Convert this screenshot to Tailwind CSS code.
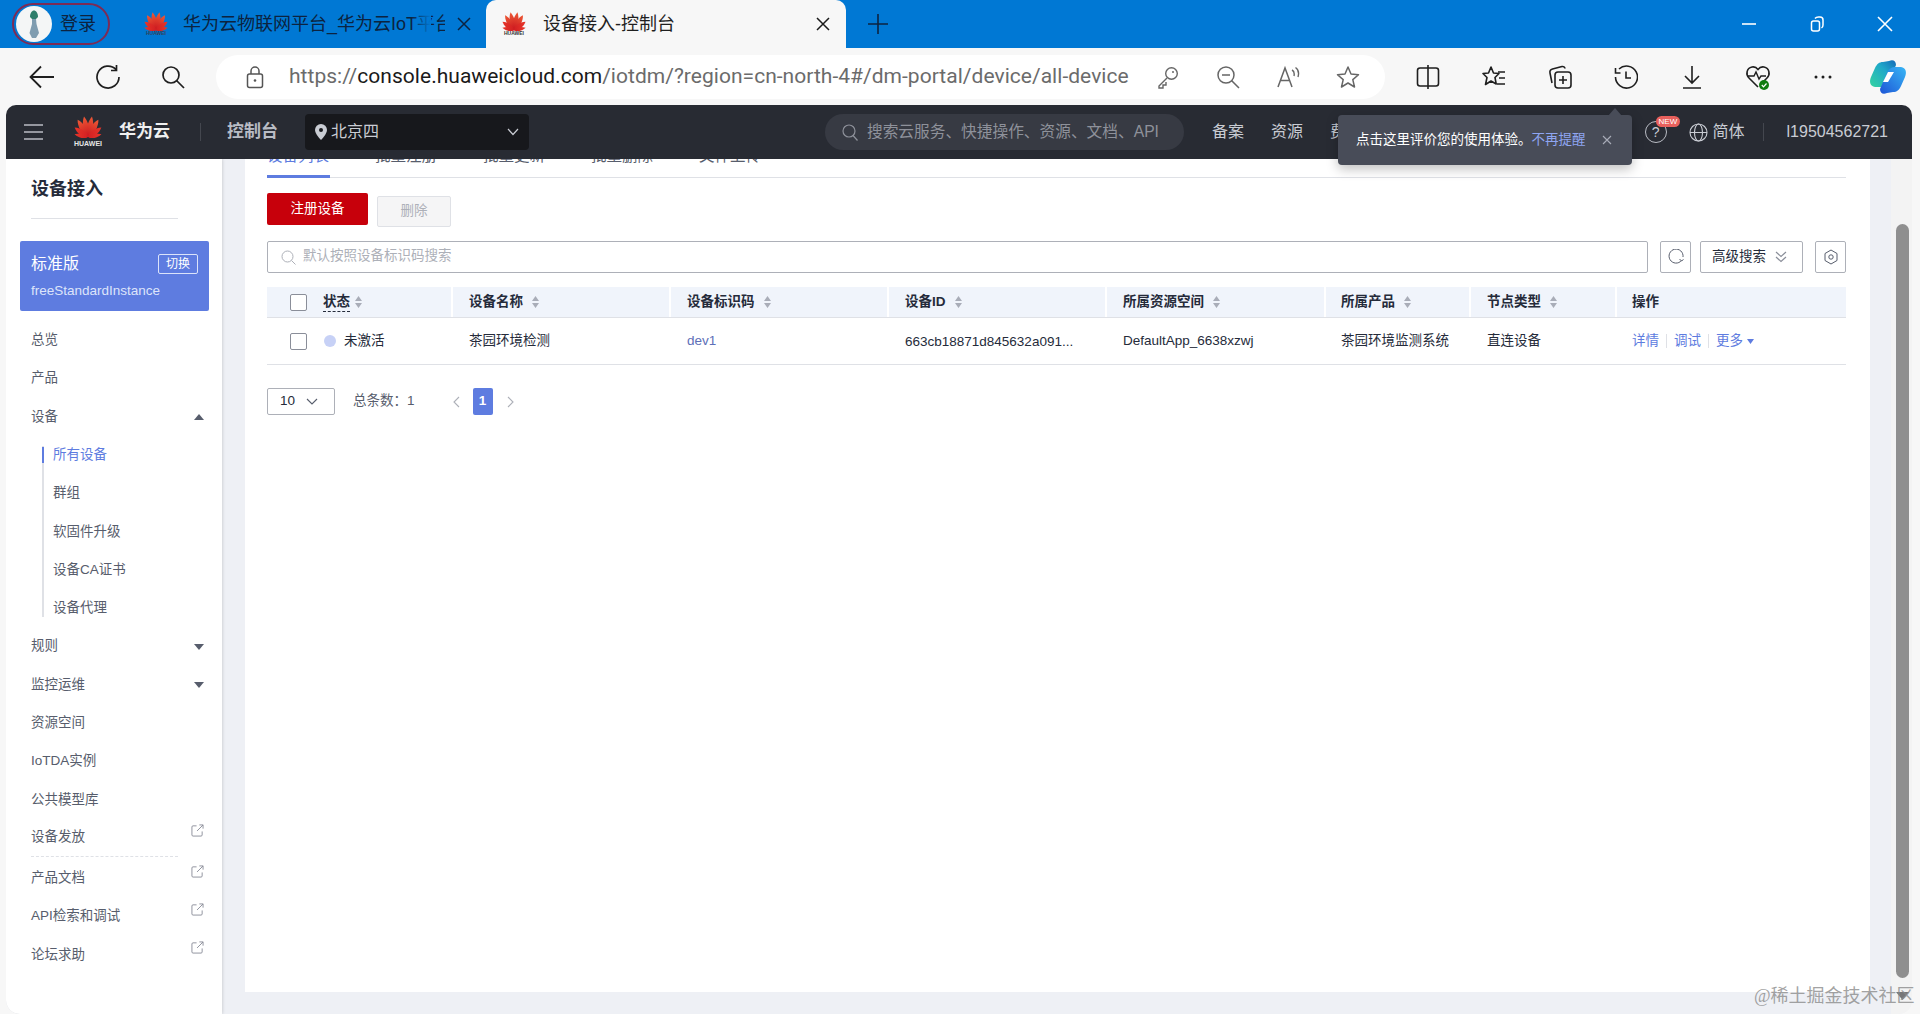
<!DOCTYPE html>
<html lang="en">
<head>
  <meta charset="UTF-8" />
  <meta name="viewport" content="width=device-width, initial-scale=1.0" />
  <title>设备接入-控制台</title>
  <script src="https://cdn.jsdelivr.net/npm/@tailwindcss/browser@4"></script>
</head>
<body class="relative w-[1920px] h-[1014px] overflow-hidden flex flex-col bg-[#f7f7f7] text-[#575d6c] text-[13.5px] [font-family:'Liberation_Sans','Noto_Sans_CJK_SC',sans-serif]">
  <!-- shared icons -->
  <svg class="absolute w-0 h-0">
    <defs>
      <linearGradient id="hwa" x1="0" y1="0" x2="0" y2="1"><stop offset="0" stop-color="#ee5a36" /><stop offset="1" stop-color="#c9151e" /></linearGradient>
      <linearGradient id="hwb" x1="0" y1="0" x2="0" y2="1"><stop offset="0" stop-color="#e8362a" /><stop offset="1" stop-color="#d11f22" /></linearGradient>
    </defs>
    <symbol id="petals" viewBox="4 0 32 24">
      <g fill="url(#hwa)">
        <path d="M20 23C15.5 17 16 7 20 0C24 7 24.5 17 20 23Z" transform="rotate(-11 20 23)" />
        <path d="M20 23C15.5 17 16 7 20 0C24 7 24.5 17 20 23Z" transform="rotate(11 20 23)" />
        <path d="M20 23C15.5 17 16 7 20 1C24 7 24.5 17 20 23Z" transform="rotate(-31 20 23)" />
        <path d="M20 23C15.5 17 16 7 20 1C24 7 24.5 17 20 23Z" transform="rotate(31 20 23)" />
      </g>
      <g fill="url(#hwb)">
        <path d="M20 23C16 19 16 11 20 5C24 11 24 19 20 23Z" transform="rotate(-54 20 23)" />
        <path d="M20 23C16 19 16 11 20 5C24 11 24 19 20 23Z" transform="rotate(54 20 23)" />
        <path d="M20 23C17 20 16.5 15 20 8C23.5 15 23 20 20 23Z" transform="rotate(-78 20 23)" />
        <path d="M20 23C17 20 16.5 15 20 8C23.5 15 23 20 20 23Z" transform="rotate(78 20 23)" />
      </g>
    </symbol>
    <symbol id="sort" viewBox="0 0 8 14">
      <path d="M4 1L7.5 6H.5Z M4 13L.5 8H7.5Z" fill="#a9adb8" />
    </symbol>
    <symbol id="ext" viewBox="0 0 14 14">
      <path d="M6 2H2.2A1.2 1.2 0 0 0 1 3.2V11.8A1.2 1.2 0 0 0 2.2 13H10.8A1.2 1.2 0 0 0 12 11.8V8M6.5 7.5L13 1M9 1H13V5" fill="none" stroke="#8a8e99" stroke-width="1" />
    </symbol>
  </svg>

  <!-- browser tab strip -->
  <div class="h-12 shrink-0 bg-[#0078d4] flex items-center text-[#0c2340]">
    <div class="ml-3 w-[98px] h-[42px] rounded-full border-2 border-[#7d2b55] flex items-center gap-[8px] pl-[2px]">
      <svg class="w-9 h-9 shrink-0" viewBox="0 0 36 36">
        <circle cx="18" cy="18" r="18" fill="#f4f6f6" />
        <path d="M14 11C14 7 16 4.5 18 4.5S22 7 22 11L20 13H16Z" fill="#2f7f6b" />
        <path d="M16 13H20L20.5 18L23 27L20 32H16L13.5 27L16 18Z" fill="#7f9db0" />
      </svg>
      <span class="text-[18px]">登录</span>
    </div>
    <div class="relative w-[358px] ml-5 h-12 flex items-center shrink-0">
      <div class="ml-[14px] w-6 flex flex-col items-center shrink-0">
        <svg class="w-[26px] h-[19px]"><use href="#petals" /></svg>
        <span class="text-[5px] leading-[5px] font-bold text-[#33415c]">HUAWEI</span>
      </div>
      <span class="ml-[15px] w-[262px] text-[18px] whitespace-nowrap overflow-hidden">华为云物联网平台_华为云IoT平台</span>
      <div class="absolute left-[281px] top-0 w-[20px] h-12 bg-linear-to-r from-transparent to-[#0078d4]"></div>
      <svg class="ml-[12px] w-[14px] h-[14px]" viewBox="0 0 14 14"><path d="M1 1L13 13M13 1L1 13" stroke="#0c2340" stroke-width="1.5" /></svg>
    </div>
    <div class="relative -ml-[2px] w-[360px] h-12 mt-0 rounded-t-[10px] bg-[#f7f7f7] flex items-center text-[#1f1f1f] shrink-0">
      <div class="ml-[16px] w-6 flex flex-col items-center shrink-0">
        <svg class="w-[26px] h-[19px]"><use href="#petals" /></svg>
        <span class="text-[5px] leading-[5px] font-bold text-[#333]">HUAWEI</span>
      </div>
      <span class="ml-[17px] text-[18px] whitespace-nowrap">设备接入-控制台</span>
      <svg class="absolute left-[330px] top-[17px] w-[14px] h-[14px]" viewBox="0 0 14 14"><path d="M1 1L13 13M13 1L1 13" stroke="#1a1a1a" stroke-width="1.5" /></svg>
    </div>
    <svg class="ml-[22px] w-5 h-5 shrink-0" viewBox="0 0 20 20"><path d="M10 0V20M0 10H20" stroke="#0c2340" stroke-width="1.6" /></svg>
    <div class="ml-auto flex items-center pr-[27px] gap-[52px]">
      <svg class="w-4 h-4" viewBox="0 0 16 16"><path d="M1 8H15" stroke="#fff" stroke-width="1.6" /></svg>
      <svg class="w-4 h-4" viewBox="0 0 16 16"><rect x="2.5" y="5" width="8" height="10" rx="2" fill="none" stroke="#fff" stroke-width="1.5" /><path d="M6 2.5C7 1.2 8 1 9.5 1H11C13 1 14 2 14 4V9C14 10.5 13.5 11.3 12.5 12" fill="none" stroke="#fff" stroke-width="1.5" /></svg>
      <svg class="w-4 h-4" viewBox="0 0 16 16"><path d="M1 1L15 15M15 1L1 15" stroke="#fff" stroke-width="1.6" /></svg>
    </div>
  </div>

  <!-- browser toolbar -->
  <div class="h-[57px] shrink-0 flex items-center bg-[#f7f7f7] text-[#1f1f1f]">
    <div class="flex items-center w-[216px] pl-[29px] gap-[40px] shrink-0">
      <svg class="w-[26px] h-[26px]" viewBox="0 0 26 26"><path d="M25 13H2M12 2.5L1.5 13L12 23.5" fill="none" stroke="#1f1f1f" stroke-width="1.8" /></svg>
      <svg class="w-[26px] h-[26px]" viewBox="0 0 26 26"><path d="M21 5.5A11 11 0 1 0 24 13M21.5 1V6.5H16" fill="none" stroke="#1f1f1f" stroke-width="1.7" /></svg>
      <svg class="w-[24px] h-[24px]" viewBox="0 0 24 24"><circle cx="10" cy="10" r="8" fill="none" stroke="#1f1f1f" stroke-width="1.7" /><path d="M15.5 15.5L23 23" stroke="#1f1f1f" stroke-width="1.7" /></svg>
    </div>
    <div class="w-[1169px] h-[44px] rounded-full bg-white flex items-center pl-[30px] pr-[25px] shrink-0">
      <svg class="w-[18px] h-[24px] shrink-0" viewBox="0 0 18 24"><path d="M5 9V6A4 4 0 0 1 13 6V9" fill="none" stroke="#555" stroke-width="1.5" /><rect x="1.5" y="9" width="15" height="13.5" rx="2" fill="none" stroke="#555" stroke-width="1.5" /><circle cx="9" cy="15.5" r="1.3" fill="#555" /></svg>
      <span class="ml-[25px] text-[21px] tracking-[0.03px] whitespace-nowrap text-[#6b6b6b] [font-family:Roboto,sans-serif]">https://<span class="text-[#1a1a1a]">console.huaweicloud.com</span>/iotdm/?region=cn-north-4#/dm-portal/device/all-device</span>
      <div class="ml-auto flex items-center gap-[36px]">
        <svg class="w-6 h-6" viewBox="0 0 24 24"><circle cx="15.5" cy="8.5" r="5.8" fill="none" stroke="#666" stroke-width="1.4" /><path d="M11 13L3 21V23H7V20H10V17" fill="none" stroke="#666" stroke-width="1.4" /><circle cx="17" cy="7" r="1" fill="#666" /></svg>
        <svg class="w-6 h-6" viewBox="0 0 24 24"><circle cx="10" cy="10" r="8" fill="none" stroke="#666" stroke-width="1.5" /><path d="M15.5 15.5L23 23M6 10H14" stroke="#666" stroke-width="1.5" /></svg>
        <svg class="w-6 h-6" viewBox="0 0 24 24"><path d="M2 22L9 3L16 22M4.5 15.5H13.5" fill="none" stroke="#666" stroke-width="1.5" /><path d="M16 5C18 6 18.5 8.5 18 11M19.5 2.5C22.5 4.5 23 8.5 22 12" fill="none" stroke="#666" stroke-width="1.4" /></svg>
        <svg class="w-6 h-6" viewBox="0 0 24 24"><path d="M12 2L15 9L22.5 9.7L16.8 14.6L18.5 22L12 18L5.5 22L7.2 14.6L1.5 9.7L9 9Z" fill="none" stroke="#666" stroke-width="1.5" stroke-linejoin="round" /></svg>
      </div>
    </div>
    <div class="flex items-center pl-[31px] gap-[42px]">
      <svg class="w-6 h-6" viewBox="0 0 24 24"><rect x="1.5" y="3" width="21" height="18" rx="2.5" fill="none" stroke="#1f1f1f" stroke-width="1.6" /><path d="M12 0V24" stroke="#1f1f1f" stroke-width="1.6" /></svg>
      <svg class="w-6 h-6" viewBox="0 0 24 24"><path d="M9 2L11.5 8L17 8.5L13 12.5L14.2 19L9 16L3.5 19.5L5 12.5L1 8.5L6.5 8Z" fill="none" stroke="#1f1f1f" stroke-width="1.6" stroke-linejoin="round" /><path d="M16 7H23M17 13H23M15 19H23" stroke="#1f1f1f" stroke-width="1.6" /></svg>
      <svg class="w-6 h-6" viewBox="0 0 24 24"><rect x="7" y="7" width="16" height="16" rx="3" fill="none" stroke="#1f1f1f" stroke-width="1.6" /><path d="M15 11V19M11 15H19" stroke="#1f1f1f" stroke-width="1.6" /><path d="M4 18L2 8C1.6 6 2.5 4.5 4.5 4L14 1.5C15.5 1.2 16.8 2 17 3.5" fill="none" stroke="#1f1f1f" stroke-width="1.6" /></svg>
      <svg class="w-6 h-6" viewBox="0 0 24 24"><path d="M5 4A11 11 0 1 1 1.5 12M1.5 3V8H6.5" fill="none" stroke="#1f1f1f" stroke-width="1.6" /><path d="M12 6.5V13H17" fill="none" stroke="#1f1f1f" stroke-width="1.6" /></svg>
      <svg class="w-6 h-6" viewBox="0 0 24 24"><path d="M12 1V17M5 11L12 18L19 11M3 23H21" fill="none" stroke="#1f1f1f" stroke-width="1.6" /></svg>
      <svg class="w-7 h-7 -ml-[2px]" viewBox="0 0 28 28"><path d="M14 24L5 15C1.5 11.5 2.5 5 8 4C10.5 3.5 12.5 4.5 14 6.5C15.5 4.5 17.5 3.5 20 4C25.5 5 26.5 11.5 23 15L19 19" fill="none" stroke="#1f1f1f" stroke-width="1.6" /><path d="M4 13H10L12 9L15 16L17 13H22" fill="none" stroke="#1f1f1f" stroke-width="1.4" /><circle cx="20" cy="22" r="5" fill="#107c10" /><path d="M17.8 22L19.5 23.8L22.5 20.5" fill="none" stroke="#fff" stroke-width="1.2" /></svg>
      <svg class="w-5 h-5 -ml-[1px]" viewBox="0 0 20 20"><circle cx="3" cy="10" r="1.5" fill="#1f1f1f" /><circle cx="10" cy="10" r="1.5" fill="#1f1f1f" /><circle cx="17" cy="10" r="1.5" fill="#1f1f1f" /></svg>
      <svg class="w-[38px] h-[36px] -ml-[6px]" viewBox="0 0 38 36">
        <defs>
          <linearGradient id="cpa" x1="0" y1="1" x2="1" y2="0"><stop offset="0" stop-color="#34d3a0" /><stop offset="0.6" stop-color="#1fa8c9" /><stop offset="1" stop-color="#1469b8" /></linearGradient>
          <linearGradient id="cpb" x1="0" y1="1" x2="1" y2="0"><stop offset="0" stop-color="#1d55d6" /><stop offset="1" stop-color="#38b6f5" /></linearGradient>
        </defs>
        <path d="M20 2C24 0 27 2 27 6L20 22C18 27 15 28 11 28H6C1 27 0 23 2 18L6 9C8 5 10 3 14 3Z" fill="url(#cpa)" />
        <path d="M18 34C14 36 11 34 11 30L18 14C20 9 23 8 27 8H32C37 9 38 13 36 18L32 27C30 31 28 33 24 33Z" fill="url(#cpb)" />
        <path d="M19 13H25L19 23H14Z" fill="#fff" />
      </svg>
    </div>
  </div>

  <!-- console window -->
  <div class="flex-1 min-h-0 mx-[6px] mr-[8px] flex flex-col rounded-t-[10px] overflow-hidden rounded-b-[14px]">
    <!-- console header -->
    <div class="relative z-10 h-[54px] shrink-0 bg-[#282b33] flex items-center text-[16px] text-[#c9ccd3]">
      <svg class="ml-[18px] w-[19px] h-[16px] shrink-0" viewBox="0 0 19 16"><path d="M0 1H19M0 8H19M0 15H19" stroke="#b9bcc4" stroke-width="1.5" /></svg>
      <div class="ml-[25px] w-[40px] flex flex-col items-center shrink-0">
        <svg class="w-[30px] h-[22px]"><use href="#petals" /></svg>
        <span class="mt-[2px] text-[7px] leading-[8px] font-bold text-[#e6e6e6]">HUAWEI</span>
      </div>
      <span class="ml-[11px] text-[17px] font-bold text-[#f0f0f0]">华为云</span>
      <div class="ml-[30px] w-px h-[18px] bg-[#44474f]"></div>
      <span class="ml-[26px] text-[17px] font-bold text-[#b9bcc4]">控制台</span>
      <div class="ml-[27px] w-[224px] h-[36px] rounded-[4px] bg-[#17181c] flex items-center pl-[10px] pr-[10px]">
        <svg class="w-[12px] h-[16px]" viewBox="0 0 12 16"><path d="M6 0A6 6 0 0 0 0 6C0 10 6 16 6 16S12 10 12 6A6 6 0 0 0 6 0Z" fill="#c9ccd3" /><circle cx="6" cy="6" r="2" fill="#17181c" /></svg>
        <span class="ml-[4px] text-[#c9ccd3]">北京四</span>
        <svg class="ml-auto w-[12px] h-[8px]" viewBox="0 0 12 8"><path d="M1 1L6 6.5L11 1" fill="none" stroke="#c9ccd3" stroke-width="1.2" /></svg>
      </div>
      <div class="ml-[296px] w-[359px] h-[36px] rounded-full bg-[#373a43] flex items-center pl-[17px] text-[#8e919a]">
        <svg class="w-[16px] h-[17px] shrink-0" viewBox="0 0 16 17"><circle cx="7" cy="7" r="6" fill="none" stroke="#8e919a" stroke-width="1.2" /><path d="M11 11.5L15.5 16.5" stroke="#8e919a" stroke-width="1.2" /></svg>
        <span class="ml-[9px] whitespace-nowrap text-[15.7px]">搜索云服务、快捷操作、资源、文档、API</span>
      </div>
      <span class="ml-[28px]">备案</span>
      <span class="ml-[27px]">资源</span>
      <span class="ml-[27px] whitespace-nowrap">费用</span>
      <div class="ml-auto flex items-center pr-[24px]">
        <div class="relative w-[22px] h-[22px] rounded-full border border-[#b9bcc4] flex items-center justify-center text-[14px]">?
          <span class="absolute -top-[6px] left-[10px] h-[11px] px-[3px] rounded-full bg-[#e8605c] text-[8px] leading-[11px] text-white">NEW</span>
        </div>
        <svg class="ml-[22px] w-[19px] h-[19px]" viewBox="0 0 19 19"><circle cx="9.5" cy="9.5" r="8.5" fill="none" stroke="#c9ccd3" stroke-width="1.1" /><ellipse cx="9.5" cy="9.5" rx="4" ry="8.5" fill="none" stroke="#c9ccd3" stroke-width="1.1" /><path d="M1 9.5H18" stroke="#c9ccd3" stroke-width="1.1" /></svg>
        <span class="ml-[5px]">简体</span>
        <div class="ml-[18px] w-px h-[18px] bg-[#44474f]"></div>
        <span class="ml-[23px]">l19504562721</span>
      </div>
    </div>

    <!-- sidebar and content -->
    <div class="flex-1 min-h-0 flex bg-[#eef0f5]">
      <aside class="w-[216px] shrink-0 bg-white shadow-[1px_0_3px_rgba(0,0,0,0.12)] flex flex-col rounded-bl-[14px]">
        <div class="mx-[25px] pt-[18px] pb-[17px] text-[18px] leading-[24px] font-bold text-[#252b3a] border-b border-[#dfe1e6] w-[147px]">设备接入</div>
        <div class="ml-[14px] mr-[13px] mt-[22px] h-[70px] rounded-[2px] bg-[#5e7ce0] px-[11px] pt-[13px] text-white">
          <div class="flex items-center justify-between">
            <span class="text-[16px] leading-[20px]">标准版</span>
            <span class="w-[40px] h-[20px] border border-[#dbe3fa] rounded-[2px] text-[12px] leading-[18px] text-center">切换</span>
          </div>
          <div class="mt-[9px] text-[13.5px] leading-[16px] text-[#dde4fa]">freeStandardInstance</div>
        </div>
        <nav class="mt-[10px] flex flex-col [&>*]:h-[38.3px] [&>*]:flex [&>*]:items-center [&>*]:pl-[25px] [&>*]:pr-[18px]">
          <a>总览</a>
          <a>产品</a>
          <a class="justify-between">设备<svg class="w-[10px] h-[6px]" viewBox="0 0 10 6"><path d="M5 0L10 6H0Z" fill="#575d6c" /></svg></a>
          <a class="relative !pl-[47px] text-[#5e7ce0]"><i class="absolute left-[36px] top-[10px] w-[2px] h-[28.3px] bg-[#dfe1e6]"></i><i class="absolute left-[36px] top-[11px] w-[2px] h-[16px] bg-[#5e7ce0]"></i>所有设备</a>
          <a class="relative !pl-[47px]"><i class="absolute left-[36px] top-0 w-[2px] h-full bg-[#dfe1e6]"></i>群组</a>
          <a class="relative !pl-[47px]"><i class="absolute left-[36px] top-0 w-[2px] h-full bg-[#dfe1e6]"></i>软固件升级</a>
          <a class="relative !pl-[47px]"><i class="absolute left-[36px] top-0 w-[2px] h-full bg-[#dfe1e6]"></i>设备CA证书</a>
          <a class="relative !pl-[47px]"><i class="absolute left-[36px] top-0 w-[2px] h-[28px] bg-[#dfe1e6]"></i>设备代理</a>
          <a class="justify-between">规则<svg class="w-[10px] h-[6px]" viewBox="0 0 10 6"><path d="M5 6L10 0H0Z" fill="#575d6c" /></svg></a>
          <a class="justify-between">监控运维<svg class="w-[10px] h-[6px]" viewBox="0 0 10 6"><path d="M5 6L10 0H0Z" fill="#575d6c" /></svg></a>
          <a>资源空间</a>
          <a>IoTDA实例</a>
          <a>公共模型库</a>
          <a class="relative justify-between border-b border-dashed border-[#dfe1e6] !mr-[44px] !pr-0 !ml-[25px] !pl-0">设备发放<svg class="absolute -right-[26px] top-[5px] w-[13px] h-[13px]"><use href="#ext" /></svg></a>
          <a class="justify-between mt-[2px]">产品文档<svg class="-mt-[14px] w-[13px] h-[13px]"><use href="#ext" /></svg></a>
          <a class="justify-between">API检索和调试<svg class="-mt-[14px] w-[13px] h-[13px]"><use href="#ext" /></svg></a>
          <a class="justify-between">论坛求助<svg class="-mt-[14px] w-[13px] h-[13px]"><use href="#ext" /></svg></a>
        </nav>
      </aside>

      <!-- main card, scrolled so the tab row sits under the header -->
      <main class="ml-[23px] w-[1625px] h-[833px] bg-white pl-[22px] pr-[24px] overflow-hidden shrink-0">
        <div class="-mt-[12px] h-[31px] border-b border-[#dfe1e6] flex items-start text-[15.5px] text-[#575d6c] relative">
          <span class="w-[63px] text-[#5e7ce0] leading-[18px] relative whitespace-nowrap">设备列表<i class="absolute left-0 top-[28px] w-[63px] h-[3px] bg-[#5e7ce0]"></i></span>
          <span class="ml-[45px] leading-[18px]">批量注册</span>
          <span class="ml-[46px] leading-[18px]">批量更新</span>
          <span class="ml-[46px] leading-[18px]">批量删除</span>
          <span class="ml-[46px] leading-[18px]">文件上传</span>
        </div>

        <div class="mt-[15px] flex items-start gap-[9px]">
          <button class="w-[101px] h-[32px] rounded-[2px] bg-[#c7000b] text-white text-[13.5px]">注册设备</button>
          <button class="mt-[3px] w-[74px] h-[31px] rounded-[2px] bg-[#f5f5f6] border border-[#dfe1e6] text-[#adb0b8] text-[13.5px]">删除</button>
        </div>

        <div class="mt-[14px] flex items-center h-[32px]">
          <div class="w-[1381px] h-full border border-[#adb0b8] rounded-[2px] flex items-center pl-[13px] text-[#adb0b8]">
            <svg class="w-[15px] h-[15px] shrink-0" viewBox="0 0 15 15"><circle cx="6.5" cy="6.5" r="5.5" fill="none" stroke="#adb0b8" /><path d="M10.5 10.5L14.5 14.5" stroke="#adb0b8" /></svg>
            <span class="ml-[7px] pb-[2px]">默认按照设备标识码搜索</span>
          </div>
          <div class="ml-[12px] w-[31px] h-full border border-[#adb0b8] rounded-[2px] flex items-center justify-center">
            <svg class="w-[16px] h-[16px]" viewBox="0 0 16 16"><path d="M13.5 11.5A7 7 0 1 1 15 8M15.5 10.5L13.5 12L11.5 10" fill="none" stroke="#575d6c" stroke-width="1" /></svg>
          </div>
          <div class="ml-[9px] w-[103px] h-full border border-[#adb0b8] rounded-[2px] flex items-center pl-[11px] text-[#252b3a]">高级搜索
            <svg class="ml-[9px] w-[12px] h-[12px]" viewBox="0 0 12 12"><path d="M1 1L6 5.5L11 1M1 6L6 10.5L11 6" fill="none" stroke="#8a8e99" stroke-width="1.2" /></svg>
          </div>
          <div class="ml-[12px] w-[31px] h-full border border-[#adb0b8] rounded-[2px] flex items-center justify-center">
            <svg class="w-[16px] h-[16px]" viewBox="0 0 16 16"><path d="M8 1L14 4.5V11.5L8 15L2 11.5V4.5Z" fill="none" stroke="#575d6c" /><circle cx="8" cy="8" r="2.2" fill="none" stroke="#575d6c" /></svg>
          </div>
        </div>

        <div class="mt-[14px] w-[1579px]">
          <div class="grid grid-cols-[186px_218px_218px_218px_219px_145px_146px_229px] h-[31px] items-center bg-[#f0f4fb] border-b border-[#dfe1e6] font-bold text-[#252b3a]">
            <div class="flex items-center pl-[23px] h-full border-r-2 border-white">
              <span class="w-[17px] h-[17px] border border-[#8a8e99] rounded-[2px] bg-white shrink-0"></span>
              <span class="ml-[16px] border-b border-dashed border-[#252b3a] leading-[18px]">状态</span>
              <svg class="ml-[4px] w-[9px] h-[14px]"><use href="#sort" /></svg>
            </div>
            <div class="flex items-center pl-[16px] h-full border-r-2 border-white">设备名称<svg class="ml-[8px] w-[9px] h-[14px]"><use href="#sort" /></svg></div>
            <div class="flex items-center pl-[16px] h-full border-r-2 border-white">设备标识码<svg class="ml-[8px] w-[9px] h-[14px]"><use href="#sort" /></svg></div>
            <div class="flex items-center pl-[16px] h-full border-r-2 border-white">设备ID<svg class="ml-[8px] w-[9px] h-[14px]"><use href="#sort" /></svg></div>
            <div class="flex items-center pl-[16px] h-full border-r-2 border-white">所属资源空间<svg class="ml-[8px] w-[9px] h-[14px]"><use href="#sort" /></svg></div>
            <div class="flex items-center pl-[15px] h-full border-r-2 border-white">所属产品<svg class="ml-[8px] w-[9px] h-[14px]"><use href="#sort" /></svg></div>
            <div class="flex items-center pl-[16px] h-full border-r-2 border-white">节点类型<svg class="ml-[8px] w-[9px] h-[14px]"><use href="#sort" /></svg></div>
            <div class="flex items-center pl-[15px] h-full">操作</div>
          </div>
          <div class="grid grid-cols-[186px_218px_218px_218px_219px_145px_146px_229px] h-[47px] items-center border-b border-[#dfe1e6] text-[#252b3a]">
            <div class="flex items-center pl-[23px]">
              <span class="w-[17px] h-[17px] border border-[#8a8e99] rounded-[2px] shrink-0"></span>
              <span class="ml-[17px] w-[12px] h-[12px] rounded-full bg-[#c7d1f6] shrink-0"></span>
              <span class="ml-[8px]">未激活</span>
            </div>
            <div class="pl-[16px]">茶园环境检测</div>
            <div class="pl-[16px] text-[#5e6fb8]">dev1</div>
            <div class="pl-[16px] pt-[3px]">663cb18871d845632a091...</div>
            <div class="pl-[16px]">DefaultApp_6638xzwj</div>
            <div class="pl-[15px]">茶园环境监测系统</div>
            <div class="pl-[16px]">直连设备</div>
            <div class="pl-[15px] flex items-center text-[#5e7ce0]">
              <span>详情</span><i class="mx-[7px] w-px h-[14px] bg-[#dfe1e6]"></i><span>调试</span><i class="mx-[7px] w-px h-[14px] bg-[#dfe1e6]"></i><span>更多</span>
              <svg class="ml-[4px] w-[7px] h-[5px]" viewBox="0 0 7 5"><path d="M3.5 5L7 0H0Z" fill="#5e7ce0" /></svg>
            </div>
          </div>
        </div>

        <div class="mt-[23px] flex items-center h-[27px]">
          <div class="w-[68px] h-full border border-[#adb0b8] rounded-[2px] flex items-center pl-[12px] text-[#252b3a]">10
            <svg class="ml-[11px] w-[12px] h-[7px]" viewBox="0 0 12 7"><path d="M1 1L6 6L11 1" fill="none" stroke="#575d6c" stroke-width="1.1" /></svg>
          </div>
          <span class="ml-[18px]">总条数：1</span>
          <svg class="ml-[38px] w-[7px] h-[12px]" viewBox="0 0 7 12"><path d="M6 1L1 6L6 11" fill="none" stroke="#adb0b8" stroke-width="1.1" /></svg>
          <span class="ml-[13px] w-[20px] h-full rounded-[2px] bg-[#5e7ce0] text-white flex items-center justify-center font-bold">1</span>
          <svg class="ml-[14px] w-[7px] h-[12px]" viewBox="0 0 7 12"><path d="M1 1L6 6L1 11" fill="none" stroke="#adb0b8" stroke-width="1.1" /></svg>
        </div>
      </main>

      <!-- scrollbar -->
      <div class="ml-[21px] w-[21px] h-full bg-[#f3f3f3] relative shrink-0">
        <div class="mt-[65px] ml-[5px] w-[13px] h-[754px] rounded-full bg-[#8f8f8f]"></div>
        <svg class="absolute left-[5px] top-[833px] w-[13px] h-[8px]" viewBox="0 0 13 8"><path d="M6.5 8L13 0H0Z" fill="#777" /></svg>
      </div>
    </div>
  </div>

  <!-- feedback tooltip over the header -->
  <div class="absolute left-[1338px] top-[115px] z-20 w-[294px] h-[50px] rounded-[4px] bg-[#484c58] shadow-[0_4px_12px_rgba(0,0,0,0.25)] flex items-center pl-[18px] text-[13.5px] text-white">
    <i class="absolute left-[270px] -top-[7px] w-0 h-0 border-x-[7px] border-x-transparent border-b-[8px] border-b-[#484c58]"></i>
    <span>点击这里评价您的使用体验。</span><span class="text-[#8fa6f2]">不再提醒</span>
    <svg class="ml-[16px] w-[10px] h-[10px]" viewBox="0 0 10 10"><path d="M1 1L9 9M9 1L1 9" stroke="#a9adb8" stroke-width="1.1" /></svg>
  </div>

  <!-- image watermark -->
  <div class="absolute left-[1754px] top-[984px] z-20 text-[18px] leading-[24px] text-[#8a8a8a]/80 whitespace-nowrap [font-family:'Liberation_Serif','Noto_Sans_CJK_SC',serif]">@稀土掘金技术社区</div>
</body>
</html>
